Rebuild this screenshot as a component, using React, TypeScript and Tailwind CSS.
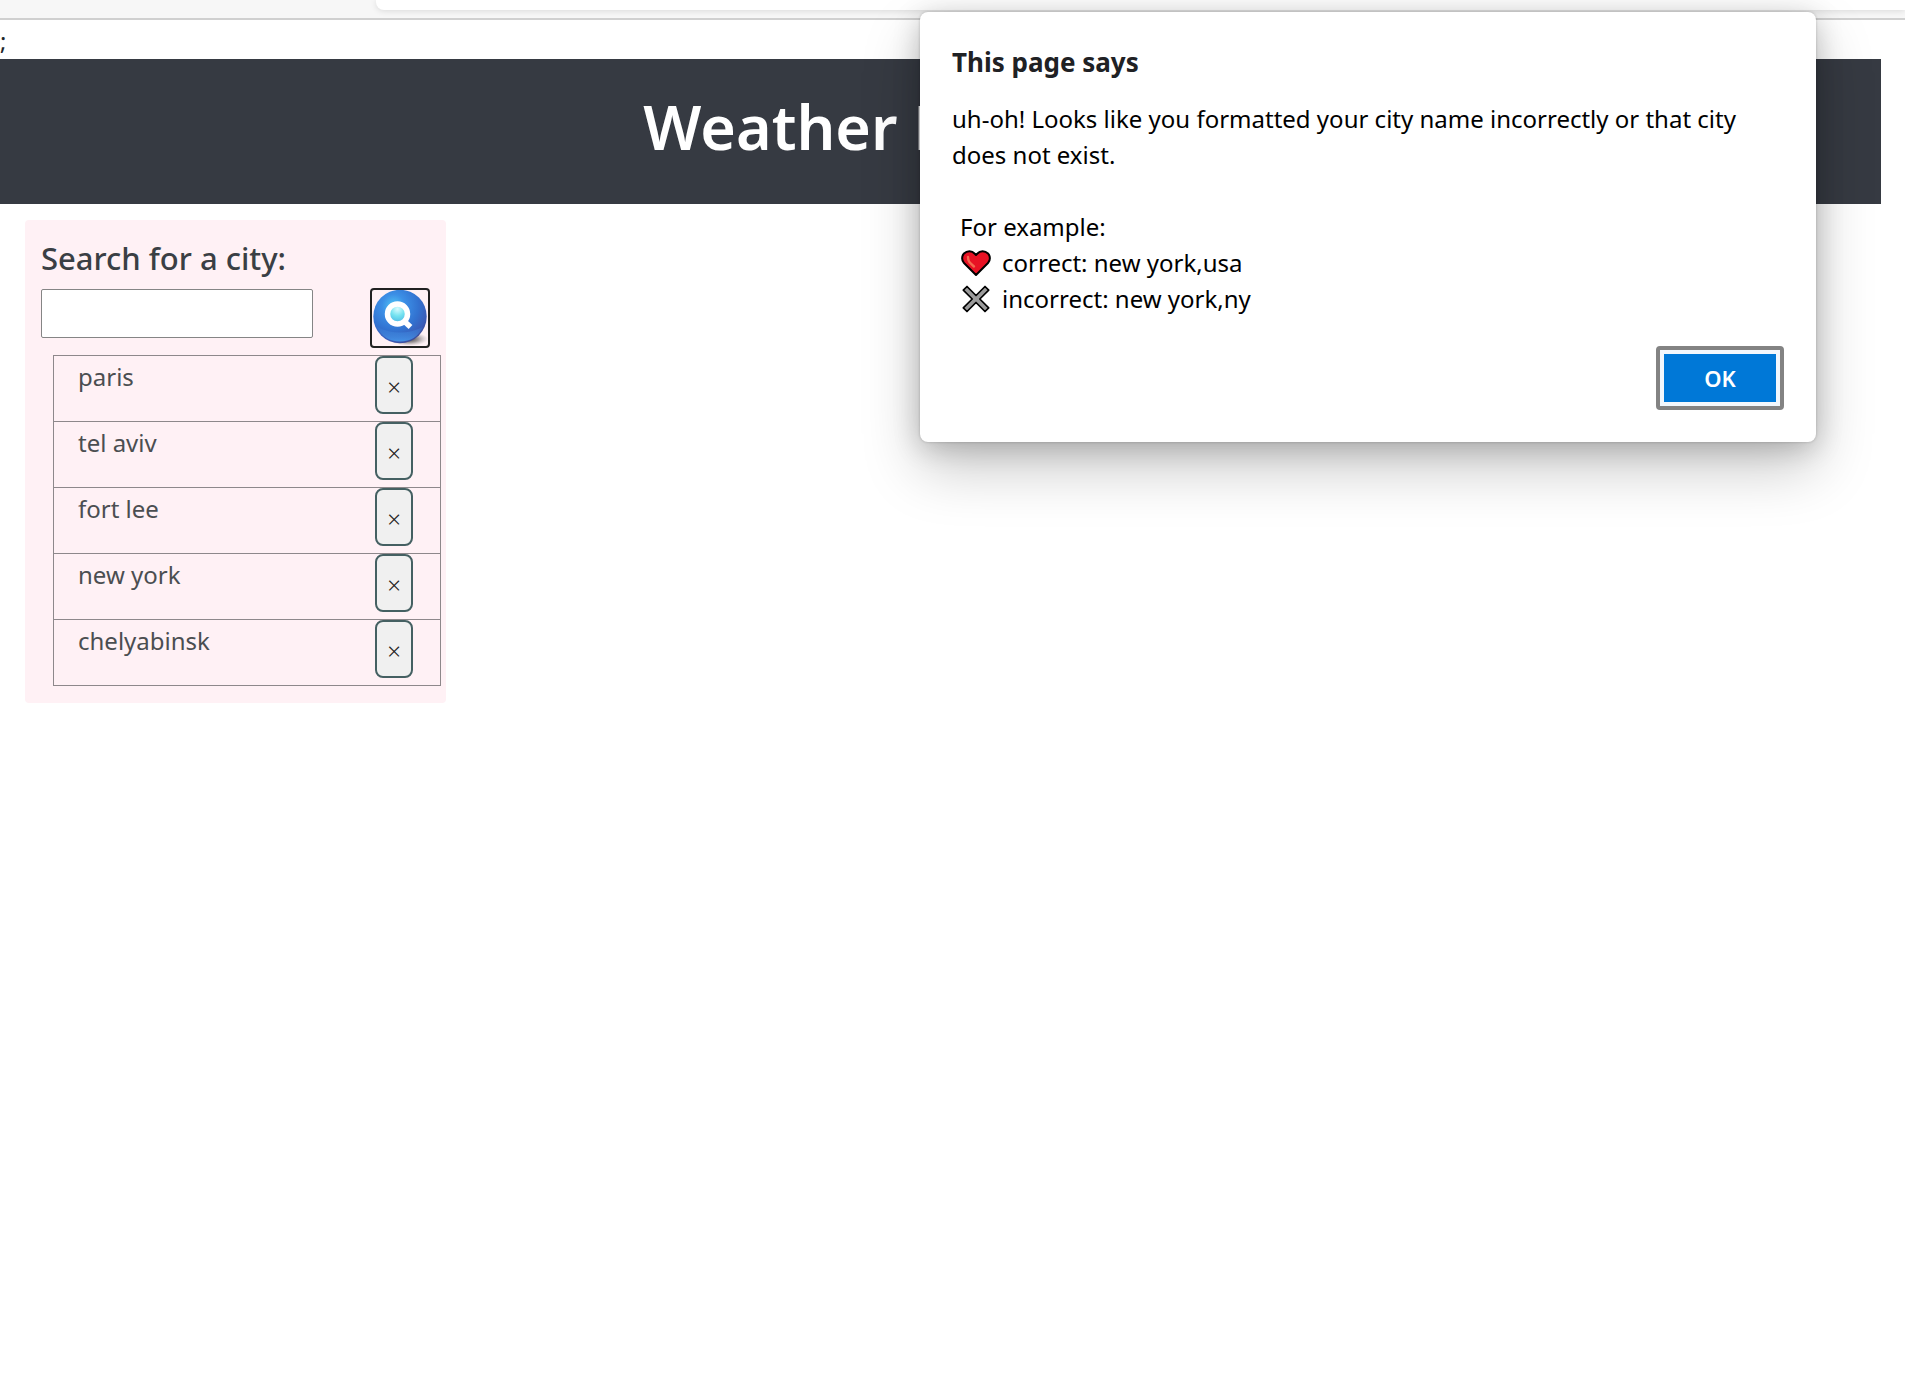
import { useState } from "react";

const cities = ["paris", "tel aviv", "fort lee", "new york", "chelyabinsk"];

function SearchIcon() {
  return (
    <svg viewBox="0 0 56 56" className="block size-14" aria-hidden="true">
      <defs>
        <radialGradient id="ball" cx="0.38" cy="0.3" r="0.72">
          <stop offset="0" stopColor="#52c6f4" />
          <stop offset="0.3" stopColor="#3c8fe6" />
          <stop offset="0.65" stopColor="#3272d0" />
          <stop offset="0.9" stopColor="#3a5cb8" />
          <stop offset="1" stopColor="#3c4c9c" />
        </radialGradient>
        <linearGradient id="gloss" x1="0" y1="0" x2="0" y2="1">
          <stop offset="0" stopColor="#3a80d8" stopOpacity="0.3" />
          <stop offset="1" stopColor="#4391e6" />
        </linearGradient>
        <radialGradient id="lens" cx="0.5" cy="0.25" r="0.7">
          <stop offset="0" stopColor="#d9fbff" />
          <stop offset="0.5" stopColor="#74e3f0" />
          <stop offset="1" stopColor="#4cb8e6" />
        </radialGradient>
        <radialGradient id="shade">
          <stop offset="0" stopColor="#222" stopOpacity="0.9" />
          <stop offset="0.5" stopColor="#444" stopOpacity="0.5" />
          <stop offset="1" stopColor="#888" stopOpacity="0" />
        </radialGradient>
      </defs>
      <ellipse cx="37" cy="49" rx="19" ry="7" fill="url(#shade)" />
      <circle cx="28" cy="26.500" r="26.700" fill="url(#ball)" />
      <path d="M5 37 Q28 48 51 37 Q44 51.500 28 51.500 Q12 51.500 5 37Z" fill="url(#gloss)" />
      <path d="M32 31 L38.500 37" stroke="#fff" strokeWidth="5.500" />
      <circle cx="25.500" cy="24" r="10" fill="url(#lens)" stroke="#fff" strokeWidth="5.500" />
    </svg>
  );
}

function HeartIcon() {
  return (
    <svg viewBox="0 0 32 28" className="h-7 w-8" aria-hidden="true">
      <path
        d="M16 26 L4 14 C1.500 11.500 1.500 7 4 4.500 C7 1.500 12 1.500 14.500 4.500 L16 6 L17.500 4.500 C20 1.500 25 1.500 28 4.500 C30.500 7 30.500 11.500 28 14 Z"
        fill="#e81224"
        stroke="#000"
        strokeWidth="2"
        strokeLinejoin="round"
      />
      <path d="M8 8 C8 12 9 13 14 17.500" fill="none" stroke="#f3694f" strokeWidth="2.400" strokeLinecap="round" />
    </svg>
  );
}

function CrossIcon() {
  return (
    <svg viewBox="0 0 32 28" className="h-7 w-8" aria-hidden="true">
      <path
        d="M7 1.500 L16 10.500 L25 1.500 L28.700 5.200 L19.800 14 L28.700 22.800 L25 26.500 L16 17.500 L7 26.500 L3.300 22.800 L12.200 14 L3.300 5.200 Z"
        fill="#9b9b9b"
        stroke="#000"
        strokeWidth="1.700"
        strokeLinejoin="round"
      />
    </svg>
  );
}

export default function App() {
  const [query, setQuery] = useState("");

  return (
    <div className="relative min-h-screen overflow-hidden bg-white font-['Noto_Sans',sans-serif] text-2xl text-[#212529]">
      <div className="h-5 border-b-2 border-[#d0d0d0] bg-[#f7f7f7] pl-[376px]">
        <div className="h-[10px] rounded-bl-lg bg-white shadow-[0_1px_6px_rgba(0,0,0,0.12)]" />
      </div>
      <p className="h-[39px] leading-[42px]">;</p>

      <header className="mr-6 bg-[#363a42] pt-5 pb-[29px] text-center">
        <h1 className="text-[61px] leading-[96px] font-semibold text-white">Weather Dashboard</h1>
      </header>

      <aside className="mt-4 ml-[25px] w-[421px] rounded bg-[#fff1f5] pt-4 pb-[17px]">
        <form onSubmit={(e) => e.preventDefault()}>
          <label htmlFor="city" className="block pl-4 text-[31px] leading-[44px] font-medium text-[#3a3f44]">
            Search for a city:
          </label>
          <div className="mt-2 flex items-start justify-between pr-4 pl-4">
            <input
              id="city"
              type="text"
              value={query}
              onChange={(e) => setQuery(e.target.value)}
              className="mt-px h-[49px] w-[272px] rounded-[2px] border border-[#858585] bg-white px-1 outline-none"
            />
            <button type="submit" aria-label="Search" className="rounded border-2 border-[#212121]">
              <SearchIcon />
            </button>
          </div>
        </form>
        <ul className="mt-[7px] mr-[5px] ml-7 border border-b-0 border-[#8e888b]">
          {cities.map((city) => (
            <li key={city} className="flex h-[66px] items-start justify-between border-b border-[#8e888b] pr-[27px] pl-6">
              <span className="leading-[42px] text-[#4b4e51]">{city}</span>
              <button
                type="button"
                aria-label={`Remove ${city}`}
                className="h-[58px] w-[38px] rounded-lg border-2 border-[#456062] bg-[#f0f0f0] pt-1 text-2xl font-light text-[#212121]"
              >
                ×
              </button>
            </li>
          ))}
        </ul>
      </aside>

      <div
        role="dialog"
        aria-labelledby="dialog-title"
        className="absolute top-3 right-[89px] w-[896px] rounded-lg bg-white p-8 text-black shadow-[0_0_3px_rgba(0,0,0,0.2),0_26px_58px_rgba(0,0,0,0.22),0_5px_28px_rgba(0,0,0,0.2)]"
      >
        <h2 id="dialog-title" className="text-[26px] leading-9 font-bold text-[#202124]">
          This page says
        </h2>
        <p className="mt-[21px] leading-9">
          uh-oh! Looks like you formatted your city name incorrectly or that city does not exist.
        </p>
        <div className="mt-9 pl-2 leading-9">
          <p>For example:</p>
          <p className="flex items-center gap-[10px]">
            <HeartIcon />
            correct: new york,usa
          </p>
          <p className="flex items-center gap-[10px]">
            <CrossIcon />
            incorrect: new york,ny
          </p>
        </div>
        <div className="mt-[29px] flex justify-end">
          <button
            type="button"
            className="rounded border-4 border-[#838383] bg-[#f3f8fd] p-1"
          >
            <span className="block w-28 bg-[#0078d7] text-[22px] leading-[48px] font-semibold text-white">OK</span>
          </button>
        </div>
      </div>
    </div>
  );
}
